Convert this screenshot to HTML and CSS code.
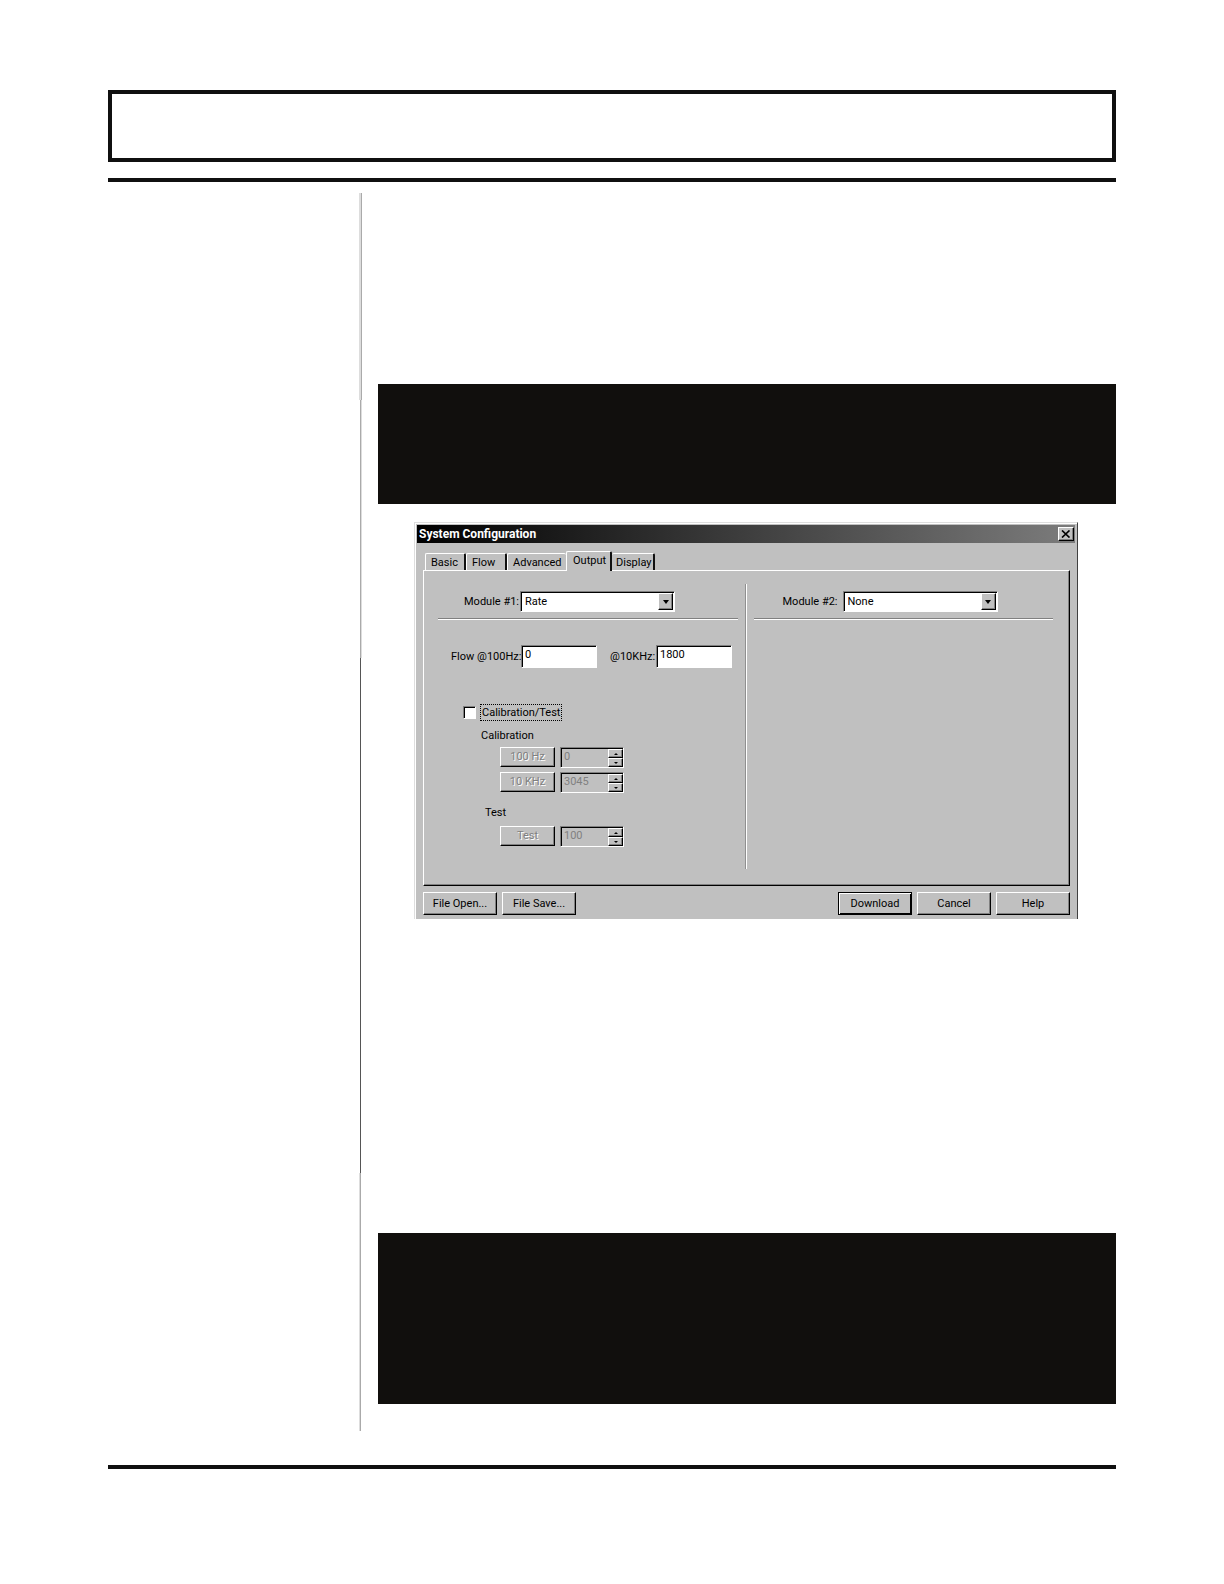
FILE: index.html
```html
<!DOCTYPE html>
<html lang="en">
<head>
<meta charset="utf-8">
<title>System Configuration</title>
<link rel="stylesheet" href="styles.css">
</head>
<body>
<div class="page">
  <header class="page-title"></header>
  <div class="content">
    <aside class="margin-rule">
      <span class="seg seg-a"></span>
      <span class="seg seg-b"></span>
      <span class="seg seg-c"></span>
      <span class="seg seg-d"></span>
    </aside>
    <main class="column">
      <div class="block block-top"></div>
      <section class="dialog" aria-labelledby="dialog-title">
        <div class="titlebar">
          <h1 id="dialog-title">System Configuration</h1>
          <button class="close" type="button" aria-label="Close">
            <svg width="10" height="8" viewBox="0 0 10 8"><path d="M1 0.5L8.500 7.500M8.500 0.500L1 7.500" stroke="#000" stroke-width="1.700" fill="none"/></svg>
          </button>
        </div>
        <div class="dialog-body">
          <div class="tabs" role="tablist">
            <button class="tab tab-basic" type="button" role="tab">Basic</button>
            <button class="tab tab-flow" type="button" role="tab">Flow</button>
            <button class="tab tab-advanced" type="button" role="tab">Advanced</button>
            <button class="tab tab-active" type="button" role="tab" aria-selected="true">Output</button>
            <button class="tab tab-display" type="button" role="tab">Display</button>
          </div>
          <div class="panel">
            <div class="module module-one">
              <div class="module-head">
                <label for="module1">Module #1:</label>
                <span class="select"><select id="module1"><option>Rate</option></select><span class="arrow"><svg width="6" height="4" viewBox="0 0 6 4"><path d="M0 0H6L3 4Z"/></svg></span></span>
              </div>
              <div class="flow-row">
                <label for="flow100">Flow @100Hz:</label>
                <input class="field" id="flow100" type="text" value="0">
                <label class="second" for="flow10k">@10KHz:</label>
                <input class="field" id="flow10k" type="text" value="1800">
              </div>
              <div class="check-row">
                <input class="check" type="checkbox" id="caltest">
                <label class="focused" for="caltest">Calibration/Test</label>
              </div>
              <h2 class="group-name">Calibration</h2>
              <div class="spin-row">
                <button class="small" type="button" disabled>100 Hz</button>
                <span class="spin"><input type="text" aria-label="100 Hz value" value="0" disabled><span class="steps"><button type="button" aria-label="Increase"><svg width="4" height="2" viewBox="0 0 4 2"><path d="M2 0L4 2H0Z"/></svg></button><button type="button" aria-label="Decrease"><svg width="4" height="2" viewBox="0 0 4 2"><path d="M0 0H4L2 2Z"/></svg></button></span></span>
              </div>
              <div class="spin-row">
                <button class="small" type="button" disabled>10 KHz</button>
                <span class="spin"><input type="text" aria-label="10 KHz value" value="3045" disabled><span class="steps"><button type="button" aria-label="Increase"><svg width="4" height="2" viewBox="0 0 4 2"><path d="M2 0L4 2H0Z"/></svg></button><button type="button" aria-label="Decrease"><svg width="4" height="2" viewBox="0 0 4 2"><path d="M0 0H4L2 2Z"/></svg></button></span></span>
              </div>
              <h2 class="group-name group-test">Test</h2>
              <div class="spin-row">
                <button class="small" type="button" disabled>Test</button>
                <span class="spin"><input type="text" aria-label="Test value" value="100" disabled><span class="steps"><button type="button" aria-label="Increase"><svg width="4" height="2" viewBox="0 0 4 2"><path d="M2 0L4 2H0Z"/></svg></button><button type="button" aria-label="Decrease"><svg width="4" height="2" viewBox="0 0 4 2"><path d="M0 0H4L2 2Z"/></svg></button></span></span>
              </div>
            </div>
            <div class="divider"></div>
            <div class="module module-two">
              <div class="module-head">
                <label for="module2">Module #2:</label>
                <span class="select"><select id="module2"><option>None</option></select><span class="arrow"><svg width="6" height="4" viewBox="0 0 6 4"><path d="M0 0H6L3 4Z"/></svg></span></span>
              </div>
            </div>
          </div>
          <div class="actions">
            <button class="action" type="button">File Open...</button>
            <button class="action" type="button">File Save...</button>
            <button class="action action-default" type="button">Download</button>
            <button class="action" type="button">Cancel</button>
            <button class="action" type="button">Help</button>
          </div>
        </div>
      </section>
      <div class="block block-bottom"></div>
    </main>
  </div>
</div>
</body>
</html>
```

FILE: styles.css
```css
* { box-sizing: border-box; }

body {
  margin: 0;
  background: #fff;
  color: #000;
  font: 11px/14px Roboto, "Liberation Sans", Arial, sans-serif;
}

button, input, select { font: inherit; color: inherit; margin: 0; border-radius: 0; }
h1, h2 { margin: 0; font: inherit; }
svg { display: block; }

.page { padding: 90px 108px 115px; }
.page-title { height: 72px; border: 4px solid #101010; }

.content {
  display: grid;
  grid-template-columns: 251px 19px minmax(0, 1fr);
  margin-top: 16px;
  border-top: 4px solid #101010;
  border-bottom: 4px solid #101010;
}

/* Vertical rule beside the text column, in four shades */
.margin-rule {
  grid-column: 2;
  display: flex;
  flex-direction: column;
  padding: 11px 0 34px;
}
.seg { width: 3px; border: solid transparent; border-width: 0 1px; background: #aaa; background-clip: padding-box; }
.seg-a { flex: 207; border-left-color: #ddd; border-width: 0 0 0 2px; }
.seg-b { flex: 258; border-right-color: #ddd; }
.seg-c { flex: 515; background-color: #555; }
.seg-d { flex: 258; border-left-color: #ddd; }

.column { grid-column: 3; padding: 202px 0 61px; }
.block { background: #110f0d; }
.block-top { height: 120px; }
.block-bottom { height: 171px; margin-top: 314px; }

.dialog {
  margin: 18px 38px 0 36px;
  padding: 2px 2px 0 1px;
  background: #c0c0c0;
  border: 1px solid #dedede;
  border-right-color: #404040;
  border-bottom: 0;
  box-shadow: inset 1px 1px #fff;
}
.titlebar {
  display: flex;
  align-items: center;
  justify-content: space-between;
  height: 18px;
  margin-left: 1px;
  padding: 0 1px 0 2px;
  background: linear-gradient(90deg, #000, #7c7c7c);
}
.titlebar h1 { color: #fff; font-size: 12px; font-weight: bold; }

.close, .small, .action, .arrow, .steps button {
  display: flex;
  align-items: center;
  justify-content: center;
  padding: 0;
  background: #c0c0c0;
  border: 1px solid #fff;
  border-right-color: #000;
  border-bottom-color: #000;
  box-shadow: inset -1px -1px #808080;
}
.close { width: 16px; height: 14px; }

.dialog-body { padding: 8px 5px 4px 7px; }

.tabs { display: flex; align-items: flex-end; padding-left: 2px; height: 19px; }
.tab {
  height: 17px;
  padding: 1px 0 0 5px;
  text-align: left;
  background: #c0c0c0;
  border: 1px solid #fff;
  border-right: 2px solid #101010;
  border-bottom: 0;
  border-radius: 2px 2px 0 0;
}
.tab-basic { width: 41px; }
.tab-flow { width: 41px; }
.tab-advanced { width: 59px; border-right-width: 0; }
.tab-active { width: 46px; height: 20px; padding: 0 0 2px 6px; margin-bottom: -1px; z-index: 1; }
.tab-display { width: 43px; padding-left: 4px; border-left: 0; }

.panel {
  display: grid;
  grid-template-columns: 1fr 16px 1fr;
  height: 316px;
  padding: 13px 16px 16px 14px;
  border: 1px solid #fff;
  border-right: 1px solid #000;
  border-bottom: 1px solid #000;
  box-shadow: inset -1px -1px #808080;
}
.module-head {
  display: flex;
  align-items: center;
  height: 36px;
  border-bottom: 1px solid #fff;
  box-shadow: inset 0 -1px #808080;
}
.module-head label { width: 56px; margin-left: 26px; white-space: nowrap; }
.module-two .module-head label { width: 60px; margin-left: 29px; }
.divider { width: 2px; margin-left: 7px; border-left: 1px solid #909090; border-right: 1px solid #fff; }

.select { position: relative; width: 155px; height: 21px; }
.select select, .field, .spin {
  border: 1px solid #808080;
  border-right-color: #fff;
  border-bottom-color: #fff;
  box-shadow: inset 1px 1px #000;
}
.select select { appearance: none; width: 100%; height: 100%; padding: 0 20px 0 4px; background: #fff; }
.arrow { position: absolute; top: 2px; right: 2px; width: 15px; height: 17px; pointer-events: none; }

.flow-row { display: flex; align-items: center; margin: 25px 0 0 13px; }
.flow-row label { width: 70px; white-space: nowrap; }
.flow-row .second { width: 46px; margin-left: 13px; }
.field { width: 76px; height: 23px; padding: 0 3px 4px; background: #fff; }

.check-row { display: flex; align-items: center; gap: 4px; margin: 36px 0 8px 25px; }
.check {
  appearance: none;
  width: 13px;
  height: 13px;
  background: #fff;
  border: 1px solid #808080;
  border-right-color: #fff;
  border-bottom-color: #fff;
  box-shadow: inset 1px 1px #000;
}
.focused { height: 17px; padding: 0 1px; border: 1px dotted #000; line-height: 16px; white-space: nowrap; }

.group-name { margin-left: 43px; }
.group-test { margin: 13px 0 6px 47px; }
.spin-row { display: flex; gap: 5px; margin: 4px 0 0 62px; }
.small { width: 55px; height: 20px; }
.small:disabled { color: #808080; text-shadow: 1px 1px #fff; }
.spin { display: flex; width: 64px; height: 21px; background: #c0c0c0; }
.spin input { flex: 1; min-width: 0; padding: 0 3px 1px; color: #808080; background: none; border: 0; }
.steps { display: grid; grid-template-rows: 1fr 1fr; width: 15px; padding-top: 1px; }

.actions { display: flex; gap: 5px; margin-top: 6px; }
.action { width: 74px; height: 23px; }
.action-default { margin-left: auto; box-shadow: inset 1px 1px #fff, inset -1px -1px #000; border-color: #000; }
```
